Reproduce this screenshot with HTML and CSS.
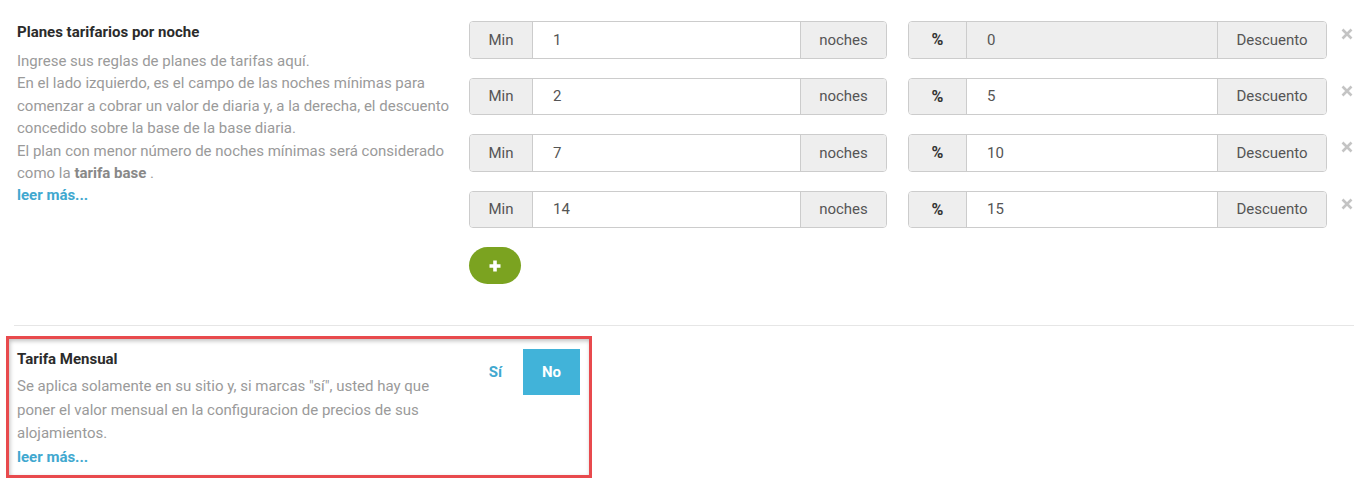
FILE: index.html
```html
<!DOCTYPE html>
<html lang="es">
<head>
<meta charset="utf-8">
<title>Planes tarifarios</title>
<link rel="stylesheet" href="styles.css">
</head>
<body>
<section class="plans">
  <div class="info">
    <h3 class="title">Planes tarifarios por noche</h3>
    <p class="desc">Ingrese sus reglas de planes de tarifas aquí.<br>En el lado izquierdo, es el campo de las noches mínimas para comenzar a cobrar un valor de diaria y, a la derecha, el descuento concedido sobre la base de la base diaria.<br>El plan con menor número de noches mínimas será considerado como la <b>tarifa base</b> .</p>
    <a class="more" href="#">leer más...</a>
  </div>
  <div class="rules">
    <div class="rule">
      <div class="group g-min"><span class="addon a-min">Min</span><span class="field">1</span><span class="addon a-noches">noches</span></div>
      <div class="group g-pct"><span class="addon a-pct">%</span><span class="field disabled">0</span><span class="addon a-desc">Descuento</span></div>
      <span class="remove"><svg width="12" height="12" viewBox="0 0 12 12"><path d="M1.5 1.5L10.5 10.5M10.5 1.5L1.5 10.5" stroke="#c4c4c4" stroke-width="2.6"/></svg></span>
    </div>
    <div class="rule">
      <div class="group g-min"><span class="addon a-min">Min</span><span class="field">2</span><span class="addon a-noches">noches</span></div>
      <div class="group g-pct"><span class="addon a-pct">%</span><span class="field">5</span><span class="addon a-desc">Descuento</span></div>
      <span class="remove"><svg width="12" height="12" viewBox="0 0 12 12"><path d="M1.5 1.5L10.5 10.5M10.5 1.5L1.5 10.5" stroke="#c4c4c4" stroke-width="2.6"/></svg></span>
    </div>
    <div class="rule">
      <div class="group g-min"><span class="addon a-min">Min</span><span class="field">7</span><span class="addon a-noches">noches</span></div>
      <div class="group g-pct"><span class="addon a-pct">%</span><span class="field">10</span><span class="addon a-desc">Descuento</span></div>
      <span class="remove"><svg width="12" height="12" viewBox="0 0 12 12"><path d="M1.5 1.5L10.5 10.5M10.5 1.5L1.5 10.5" stroke="#c4c4c4" stroke-width="2.6"/></svg></span>
    </div>
    <div class="rule">
      <div class="group g-min"><span class="addon a-min">Min</span><span class="field">14</span><span class="addon a-noches">noches</span></div>
      <div class="group g-pct"><span class="addon a-pct">%</span><span class="field">15</span><span class="addon a-desc">Descuento</span></div>
      <span class="remove"><svg width="12" height="12" viewBox="0 0 12 12"><path d="M1.5 1.5L10.5 10.5M10.5 1.5L1.5 10.5" stroke="#c4c4c4" stroke-width="2.6"/></svg></span>
    </div>
    <button class="add" type="button"><svg width="14" height="14" viewBox="0 0 14 14"><path d="M7 1.5V12.5M1.5 7H12.5" stroke="#fff" stroke-width="3.6"/></svg></button>
  </div>
</section>
<hr class="divider">
<section class="monthly">
  <div class="info">
    <h3 class="title">Tarifa Mensual</h3>
    <p class="desc m-desc">Se aplica solamente en su sitio y, si marcas "sí", usted hay que poner el valor mensual en la configuracion de precios de sus alojamientos.</p>
    <a class="more m-more" href="#">leer más...</a>
  </div>
  <div class="toggle">
    <span class="yes">Sí</span>
    <span class="no">No</span>
  </div>
</section>
</body>
</html>
```
FILE: styles.css
```css
* { box-sizing: border-box; }
html, body { margin: 0; padding: 0; background: #fff; }
body {
  font-family: Roboto, "Liberation Sans", Arial, sans-serif;
  font-size: 15px;
  color: #333;
  width: 1372px;
  height: 481px;
  overflow: hidden;
}
.plans {
  display: flex;
  padding-top: 21px;
}
.plans .info {
  width: 469px;
  padding: 1px 12px 0 17px;
}
.title {
  margin: 0;
  font-size: 15px;
  line-height: 20px;
  font-weight: 700;
  color: #2b2b2b;
}
.desc {
  margin: 8px 0 0;
  color: #9a9a9a;
  line-height: 22.4px;
}
.desc b { color: #888; font-weight: 700; }
.more {
  display: block;
  color: #41a8cf;
  font-weight: 700;
  text-decoration: none;
  line-height: 22px;
}
.rules {
  display: flex;
  flex-direction: column;
  gap: 19px;
}
.rule {
  display: flex;
  align-items: flex-start;
  height: 37.5px;
}
.group {
  display: flex;
  height: 37.5px;
  border: 1px solid #ccc;
  border-radius: 4px;
  overflow: hidden;
  font-size: 15px;
  color: #555;
}
.g-min { width: 418px; margin-right: 21px; }
.g-pct { width: 419px; }
.addon {
  display: flex;
  align-items: center;
  justify-content: center;
  background: #eee;
  flex: none;
}
.a-min { width: 63px; border-right: 1px solid #ccc; }
.a-noches { width: 86px; border-left: 1px solid #ccc; }
.a-pct { width: 58px; border-right: 1px solid #ccc; font-weight: 700; color: #333; font-size: 16px; }
.a-desc { width: 109px; border-left: 1px solid #ccc; }
.field {
  flex: 1;
  display: flex;
  align-items: center;
  padding-left: 20px;
  background: #fff;
}
.field.disabled { background: #eee; }
.remove {
  width: 40px;
  display: flex;
  justify-content: center;
  padding-top: 7px;
}
.add {
  width: 52px;
  height: 37px;
  border: none;
  border-radius: 19px;
  background: #7ba320;
  display: flex;
  align-items: center;
  justify-content: center;
  padding: 0;
  cursor: pointer;
}
.divider {
  border: none;
  border-top: 1px solid #e6e6e6;
  margin: 41px 18px 0 14px;
}
.monthly {
  margin: 10px 0 0 6px;
  width: 586px;
  height: 142px;
  border: 3px solid #e84a4d;
  box-shadow: inset 1px 2px 4px rgba(0,0,0,0.25);
  display: flex;
  justify-content: space-between;
  padding: 10px 9px 0 8px;
}
.monthly .info { width: 425px; }
.m-desc { margin-top: 6px; line-height: 23.5px; }
.m-more { line-height: 22px; }
.toggle {
  display: flex;
  align-items: center;
  height: 46px;
}
.yes {
  color: #41a8cf;
  font-weight: 700;
  margin-right: 21px;
}
.no {
  width: 57px;
  height: 46px;
  background: #41b3d9;
  color: #fff;
  font-weight: 700;
  display: flex;
  align-items: center;
  justify-content: center;
}
```
